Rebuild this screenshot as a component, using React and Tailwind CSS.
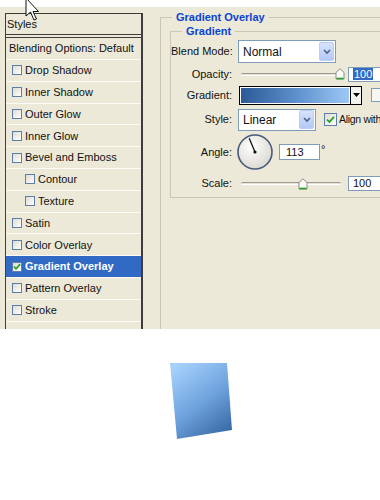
import React from 'react';

const rows = [
  { label: 'Drop Shadow' },
  { label: 'Inner Shadow' },
  { label: 'Outer Glow' },
  { label: 'Inner Glow' },
  { label: 'Bevel and Emboss' },
  { label: 'Contour', indent: true },
  { label: 'Texture', indent: true },
  { label: 'Satin' },
  { label: 'Color Overlay' },
  { label: 'Gradient Overlay', selected: true },
  { label: 'Pattern Overlay' },
  { label: 'Stroke' },
];

const Check = ({ checked, size = 'w-[10px] h-[10px]' }) => (
  <div
    className={`${size} shrink-0 border border-[#5d7ea9] bg-gradient-to-br from-[#dedbd0] to-white flex items-center justify-center`}
  >
    {checked && (
      <svg width="9" height="9" viewBox="0 0 9 9">
        <path d="M1 4.5 L3.4 7 L8 1.8" fill="none" stroke="#21a121" strokeWidth="1.8" />
      </svg>
    )}
  </div>
);

const DropButton = ({ h = 'h-[19px]' }) => (
  <div
    className={`w-[15px] ${h} mr-[1px] rounded-[2px] border border-[#b9cdf5] bg-gradient-to-b from-[#d7e3fc] to-[#b3c8f5] flex items-center justify-center`}
  >
    <svg width="8" height="6" viewBox="0 0 8 6">
      <path d="M1 1 L4 4 L7 1" fill="none" stroke="#4d6185" strokeWidth="1.6" />
    </svg>
  </div>
);

const Select = ({ value, w }) => (
  <div className={`${w} h-full border border-[#7f9db9] bg-white flex items-center justify-between pl-[4px]`}>
    <span className="text-[12px]">{value}</span>
    <DropButton />
  </div>
);

const Slider = ({ pos }) => (
  <div className="relative ml-[3px] w-[100px] h-[14px] flex items-center">
    <div className="w-full h-[3px] rounded-full border-t border-[#9d9a8f] bg-[#e4e1d6] border-b border-b-white" />
    <svg
      className="absolute top-[1px]"
      style={{ left: pos - 5 }}
      width="10"
      height="12"
      viewBox="0 0 10 12"
    >
      <path d="M1 4.5 L5 0.8 L9 4.5 L9 11 L1 11 Z" fill="#fbfbf8" stroke="#8b8b86" strokeWidth="1" />
      <path d="M1.5 10.5 L8.5 10.5" stroke="#21a121" strokeWidth="1.6" />
    </svg>
  </div>
);

const Field = ({ children, className = '' }) => (
  <div className={`border border-[#7f9db9] bg-white flex items-center pl-[4px] ${className}`}>{children}</div>
);

const Label = ({ children }) => (
  <div className="w-[62px] shrink-0 text-right pr-[1px]">{children}</div>
);

export default function App() {
  return (
    <div className="relative w-[380px] h-[500px] bg-white overflow-hidden font-['Liberation_Sans',Arial,sans-serif] text-[11px] text-[#111]">
      <div className="h-[7px]" />

      <div className="flex h-[322px] bg-[#ece9d8] overflow-hidden">
        {/* styles list */}
        <div className="ml-[5px] mt-[6px] w-[138px] shrink-0 border-l border-t border-r-2 border-[#3d3d3b]">
          <div className="h-[20px] flex items-center pl-[1px]">Styles</div>
          <div className="h-[4px] border-y border-[#3d3d3b]" />
          <div className="h-[22px] flex items-center pl-[3px] border-b border-[#fbfaf5]">
            Blending Options: Default
          </div>
          {rows.map((r) => (
            <div
              key={r.label}
              className={`h-[21.8px] flex items-center gap-[3px] border-b border-[#fbfaf5] ${
                r.indent ? 'pl-[19px]' : 'pl-[6px]'
              } ${r.selected ? 'bg-[#316ac5] text-white font-bold' : ''}`}
            >
              <Check checked={r.selected} />
              <span>{r.label}</span>
            </div>
          ))}
        </div>

        {/* gradient overlay group */}
        <div className="ml-[17px] mt-[10px] w-[260px] shrink-0 border-l border-t border-[#c9c6b6] pl-[9px]">
          <div className="-mt-[7px] ml-[2px] w-fit px-[4px] bg-[#ece9d8] leading-[13px] font-bold text-[#0b43d3]">
            Gradient Overlay
          </div>
          <div className="mt-[7px] border-l border-t border-b border-[#c9c6b6] pb-[3px]">
            <div className="-mt-[7px] ml-[11px] w-fit px-[4px] bg-[#ece9d8] leading-[13px] font-bold text-[#0b43d3]">
              Gradient
            </div>

            <div className="mt-[2px] flex flex-col whitespace-nowrap">
              <div className="h-[23px] flex items-center gap-[5px]">
                <Label>Blend Mode:</Label>
                <div className="h-[23px] flex">
                  <Select value="Normal" w="w-[98px]" />
                </div>
              </div>

              <div className="h-[22px] flex items-center gap-[5px]">
                <Label>Opacity:</Label>
                <Slider pos={99} />
                <Field className="ml-[2px] w-[40px] h-[15px] pl-[3px]">
                  <span className="bg-[#316ac5] text-white leading-[12px] px-[1px]">100</span>
                </Field>
              </div>

              <div className="h-[20px] flex items-center gap-[5px]">
                <Label>Gradient:</Label>
                <div className="ml-[1px] flex items-center">
                  <div className="w-[112px] h-[19px] border border-black p-[1px] bg-white">
                    <div className="w-full h-full bg-gradient-to-r from-[#2c5a96] via-[#5d8fcb] to-[#9dc8f5]" />
                  </div>
                  <div className="w-[11px] h-[19px] border border-l-0 border-black bg-[#f4f3ee] flex items-center justify-center">
                    <svg width="7" height="4" viewBox="0 0 7 4">
                      <path d="M0 0 L7 0 L3.5 4 Z" fill="#000" />
                    </svg>
                  </div>
                  <div className="ml-[9px] w-[20px] h-[14px] border border-[#7f9db9] bg-[#f7f6f1]" />
                </div>
              </div>

              <div className="mt-[3px] h-[23px] flex items-center gap-[5px]">
                <Label>Style:</Label>
                <div className="h-[22px] flex">
                  <Select value="Linear" w="w-[78px]" />
                </div>
                <div className="ml-[3px] flex items-center gap-[2px]">
                  <Check checked size="w-[13px] h-[13px]" />
                  <span className="text-[10.5px] tracking-[-0.3px]">Align with</span>
                </div>
              </div>

              <div className="h-[42px] flex items-center gap-[5px]">
                <Label>Angle:</Label>
                <svg width="38" height="38" viewBox="0 0 38 38" className="-ml-[2px]">
                  <defs>
                    <radialGradient id="dial" cx="0.4" cy="0.35" r="0.7">
                      <stop offset="0" stopColor="#ffffff" />
                      <stop offset="1" stopColor="#d9d7cf" />
                    </radialGradient>
                  </defs>
                  <circle cx="19" cy="19" r="17" fill="url(#dial)" stroke="#4a5a7c" strokeWidth="1.6" />
                  <line x1="19" y1="19" x2="13.2" y2="5.3" stroke="#111" strokeWidth="1.3" />
                  <circle cx="19" cy="19" r="1.6" fill="#111" />
                </svg>
                <Field className="w-[41px] h-[16px] pl-[6px]">113</Field>
                <span className="self-start mt-[10px] -ml-[4px]">°</span>
              </div>

              <div className="h-[21px] flex items-center gap-[5px]">
                <Label>Scale:</Label>
                <Slider pos={62} />
                <Field className="ml-[2px] w-[40px] h-[15px] pl-[4px]">100</Field>
              </div>
            </div>
          </div>
        </div>
      </div>

      {/* preview shape */}
      <svg width="380" height="171" viewBox="0 0 380 171" className="block">
        <defs>
          <linearGradient id="shape" x1="0.15" y1="0" x2="0.75" y2="1">
            <stop offset="0" stopColor="#a6d1fc" />
            <stop offset="0.55" stopColor="#6ea2dc" />
            <stop offset="1" stopColor="#3a6ca7" />
          </linearGradient>
        </defs>
        <polygon points="170,34 227,34 232,101 177,110" fill="url(#shape)" />
      </svg>

      {/* mouse pointer */}
      <svg className="absolute left-[25px] top-[-3px]" width="16" height="26" viewBox="0 0 16 26">
        <path
          d="M1 1 L1 19 L5.5 15 L9 23 L11.5 22 L8 14.5 L13.5 14.5 Z"
          fill="#fff"
          stroke="#111"
          strokeWidth="1"
          strokeLinejoin="round"
        />
      </svg>
    </div>
  );
}
